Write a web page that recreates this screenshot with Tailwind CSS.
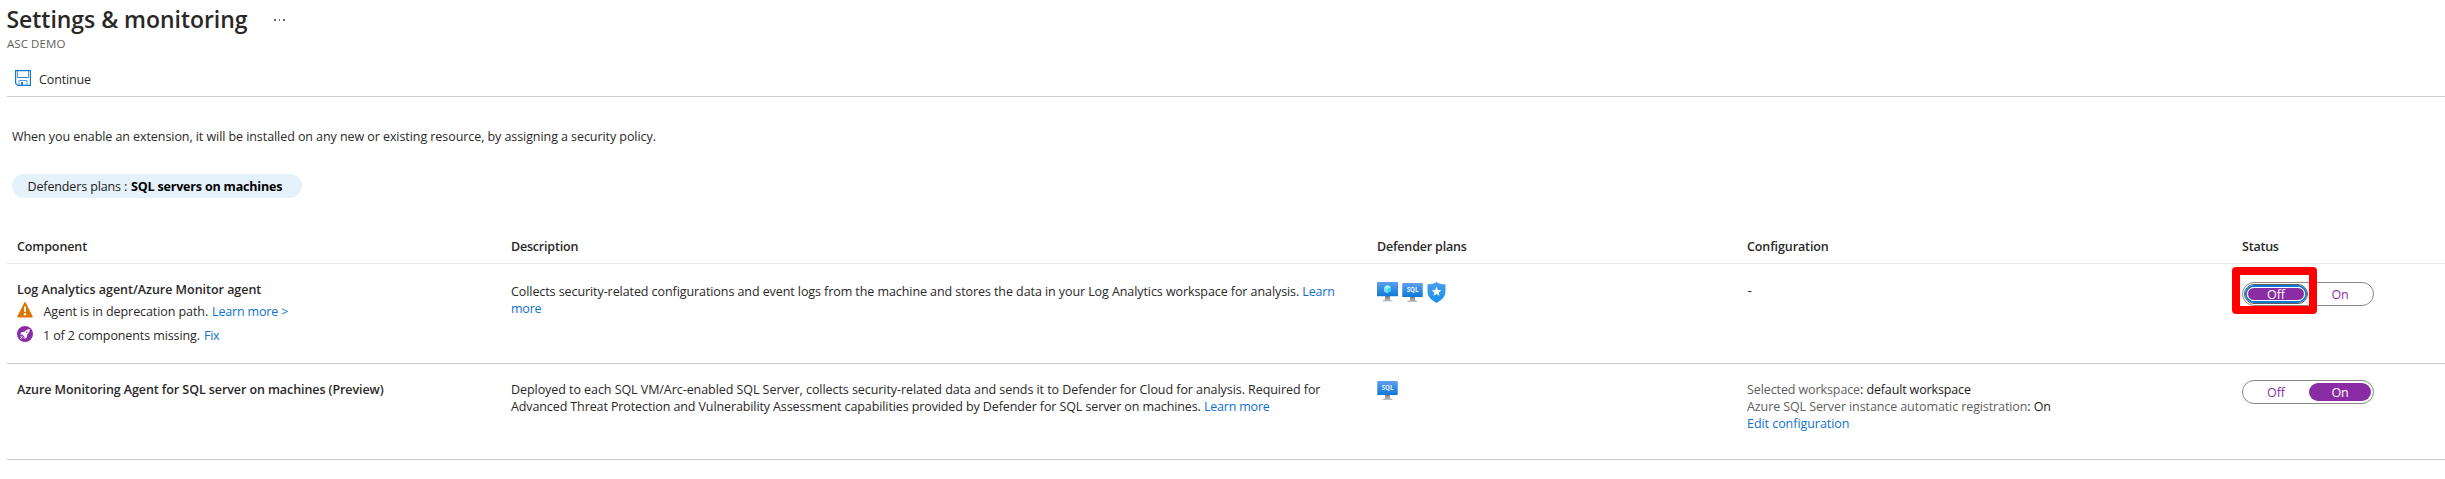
<!DOCTYPE html>
<html lang="en">
<head>
<meta charset="utf-8">
<title>Settings &amp; monitoring</title>
<script src="https://cdn.jsdelivr.net/npm/@tailwindcss/browser@4"></script>
</head>
<body class="bg-white [font-family:'Open_Sans','Noto_Sans',sans-serif] text-[12.5px] leading-[17px] text-[#292827] tracking-[-0.1px] whitespace-nowrap overflow-hidden">
<svg class="absolute size-0">
  <defs>
    <linearGradient id="screen" x1="0" y1="0" x2="0" y2="1"><stop offset="0" stop-color="#5ea0ef"/><stop offset="1" stop-color="#0f78d7"/></linearGradient>
    <linearGradient id="stand" x1="0" y1="0" x2="0" y2="1"><stop offset="0" stop-color="#767676"/><stop offset="1" stop-color="#c4c4c4"/></linearGradient>
    <linearGradient id="shield" x1="0" y1="0" x2="0" y2="1"><stop offset="0" stop-color="#4a9ee8"/><stop offset="1" stop-color="#1391f2"/></linearGradient>
    <symbol id="monitor" viewBox="0 0 21 20">
      <path d="M8 14h5v3.200q.3 1 2.700 1.500v.8H5.300v-.8Q7.700 18.200 8 17.200Z" fill="url(#stand)"/>
      <rect width="21" height="14.300" rx=".5" fill="url(#screen)"/>
    </symbol>
    <symbol id="sql" viewBox="0 0 21 20">
      <use href="#monitor" width="21" height="19.500"/>
      <text x="10.600" y="9.100" text-anchor="middle" font-family="Open Sans, sans-serif" font-size="6.200" font-weight="700" letter-spacing="0" fill="#e6f1fd">SQL</text>
    </symbol>
  </defs>
</svg>

<header class="pt-[3px] pl-[6px]">
  <div class="flex h-8">
    <h1 class="text-[23px] leading-8 font-semibold tracking-[-0.040px] w-[267px] pl-[0.500px]">Settings &amp; monitoring</h1>
    <div class="flex gap-[3px] pt-4 pl-px"><i class="size-[1.500px] bg-[#666]"></i><i class="size-[1.500px] bg-[#666]"></i><i class="size-[1.500px] bg-[#666]"></i></div>
  </div>
  <div class="mt-px ml-px text-[11.500px] leading-[15px] tracking-[0.070px] text-[#605e5c]">ASC DEMO</div>
</header>

<div class="ml-[7px] h-[46px] border-b border-[#d0d0d0] pl-2 pt-[19px] flex">
  <svg class="size-4" viewBox="0 0 16 16">
    <path d="M2.500 1v6.500h11V1M4 15v-4.500h8V15" fill="#fff" stroke="#4d9fe3"/>
    <rect x="6" y="12" width="2" height="3.500" fill="#2b88d8"/>
    <path d="M.6.6h14.800v14.800H2.700L.6 13.300Z" fill="none" stroke="#0f78d4" stroke-width="1.200"/>
    <path d="M2.500 7.500h11" stroke="#2b88d8"/>
  </svg>
  <span class="ml-[8px] mt-px tracking-[-0.130px]">Continue</span>
</div>

<main class="ml-[7px]">
  <p class="pt-[31px] pl-[5px] tracking-[-0.070px]">When you enable an extension, it will be installed on any new or existing resource, by assigning a security policy.</p>
  <div class="mt-[29px] ml-[5px] w-[290px] h-6 rounded-full bg-[#e5f1fb] pl-[15.500px] pt-1 flex text-[#1b1a19]">
    <span class="w-[103.500px] tracking-[-0.130px]">Defenders plans :</span><b class="font-bold text-black tracking-[-0.180px]">SQL servers on machines</b>
  </div>

  <div class="mt-10 grid grid-cols-[494px_866px_370px_495px_1fr] pl-[10px] h-[26px] border-b border-[#e8e8e8] font-semibold">
    <div>Component</div>
    <div class="tracking-[-0.200px]">Description</div>
    <div class="tracking-[-0.180px]">Defender plans</div>
    <div>Configuration</div>
    <div class="tracking-[-0.220px]">Status</div>
  </div>

  <div class="grid grid-cols-[494px_866px_370px_495px_1fr] pl-[10px] h-[100px] border-b border-[#c8c8c8]">
    <div class="pt-[17px]">
      <div class="font-semibold tracking-[-0.030px]">Log Analytics agent/Azure Monitor agent</div>
      <div class="flex mt-[5px]">
        <svg class="w-4 h-4 -mt-px" viewBox="0 0 16 16"><path d="M8 .9 14.900 14.700H1.100Z" fill="#db7500" stroke="#db7500" stroke-width="1.600" stroke-linejoin="round"/><path d="M6.900 4.500h2.200l-.3 5.500H7.200Z" fill="#fff"/><circle cx="8" cy="12.300" r="1.250" fill="#fff"/></svg>
        <span class="ml-[10.500px] tracking-[-0.080px]">Agent is in deprecation path.</span><a class="ml-[4px] text-[#0f72cf] tracking-[-0.170px]">Learn more &gt;</a>
      </div>
      <div class="flex mt-[7px]">
        <svg class="w-4 h-4 -mt-px" viewBox="0 0 16 16"><circle cx="8" cy="8" r="8" fill="#8a2da5"/><path d="M12.900 3.100q-3.200 0-5.600 2.700L4.600 6.300 3 8.500l2.300.1L7.400 10.700 7.500 13l2.200-1.600.5-2.700Q12.900 6.300 12.900 3.100Z" fill="#fff"/><path d="M5.700 10.300 3.200 12.800M4.700 9.700l-1.200 1.200M6.300 11.300l-1.200 1.200" stroke="#fff" stroke-width=".8"/><circle cx="9.700" cy="6.300" r=".8" fill="#8a2da5"/></svg>
        <span class="ml-[10px] w-[161px]">1 of 2 components missing.</span><a class="text-[#0f72cf] tracking-[-0.300px]">Fix</a>
      </div>
    </div>
    <div class="pt-[19px] tracking-[-0.078px]">Collects security-related configurations and event logs from the machine and stores the data in your Log Analytics workspace for analysis. <a class="text-[#0f72cf] tracking-[-0.200px]">Learn<br>more</a></div>
    <div class="pt-[18px] flex gap-1">
      <svg class="w-[21px] h-5" viewBox="0 0 21 20"><use href="#monitor" width="21" height="20"/><path d="m10.500 3 3.500 2v4.200l-3.500 2-3.500-2V5Z" fill="#32d4f5"/><path d="m10.500 3 3.500 2-3.500 2L7 5Z" fill="#a8f0fb"/><path d="M7 5l3.500 2v4.200L7 9.200Z" fill="#7fe3f8"/></svg>
      <svg class="w-[21px] h-5 mt-px" viewBox="0 0 21 20"><use href="#sql" width="21" height="20"/></svg>
      <svg class="w-[19px] h-[21px]" viewBox="0 0 19 21"><path d="M9.500 0Q12.500 2.300 18.500 2.300v7.500q0 6.500-9 11.200-9-4.700-9-11.200V2.300Q6.500 2.300 9.500 0Z" fill="url(#shield)"/><path d="m9.500 4.800 1.400 3.100 3.400.3-2.600 2.200.8 3.300-3-1.700-3 1.700.8-3.300-2.600-2.200 3.400-.3Z" fill="#fff"/></svg>
    </div>
    <div class="pt-[18px] pl-[0.500px] scale-x-[1.1] origin-left">-</div>
    <div class="pt-[18px]">
      <div class="relative flex w-[132px] h-6 rounded-full border border-[#8a8886] text-[#8a2da5]">
        <div class="ml-px mt-px w-[64px] h-5 rounded-full border border-[#605e5c] shrink-0">
          <div class="h-[18px] rounded-full border-2 border-[#0f78d4]">
            <div class="h-[14px] rounded-full border border-white bg-[#8a2da5] text-white text-center leading-[17px]"><div class="-mt-[3px] pt-px">Off</div></div>
          </div>
        </div>
        <div class="w-[64px] text-center pt-[3px]">On</div>
        <div class="absolute -left-[11px] -top-[16px] w-[85px] h-[47px] border-8 border-[#ff0000] rounded-[4px]"></div>
      </div>
    </div>
  </div>

  <div class="grid grid-cols-[494px_866px_370px_495px_1fr] pl-[10px] h-24 border-b border-[#c8c8c8]">
    <div class="pt-[17px] font-semibold tracking-[-0.080px]">Azure Monitoring Agent for SQL server on machines (Preview)</div>
    <div class="pt-[17px]"><span class="tracking-[-0.060px]">Deployed to each SQL VM/Arc-enabled SQL Server, collects security-related data and sends it to Defender for Cloud for analysis. Required for</span><br><span class="tracking-[-0.107px]">Advanced Threat Protection and Vulnerability Assessment capabilities provided by Defender for SQL server on machines. </span><a class="text-[#0f72cf] tracking-[-0.200px]">Learn more</a></div>
    <div class="pt-[17px]"><svg class="w-[21px] h-5" viewBox="0 0 21 20"><use href="#sql" width="21" height="20"/></svg></div>
    <div class="pt-[17px] text-[#1b1a19]">
      <div><span class="text-[#605e5c]">Selected workspace</span>: <span class="tracking-[-0.140px]">default workspace</span></div>
      <div><span class="text-[#605e5c]">Azure SQL Server instance automatic registration</span>: On</div>
      <a class="text-[#0f72cf] tracking-[-0.050px]">Edit configuration</a>
    </div>
    <div class="pt-4">
      <div class="flex w-[132px] h-6 rounded-full border border-[#8a8886] text-[#8a2da5] p-[2px]">
        <div class="w-[64px] text-center pt-px pr-[2px]">Off</div>
        <div class="w-[62px] rounded-full bg-[#8a2da5] text-white text-center pt-px">On</div>
      </div>
    </div>
  </div>
</main>
</body>
</html>
